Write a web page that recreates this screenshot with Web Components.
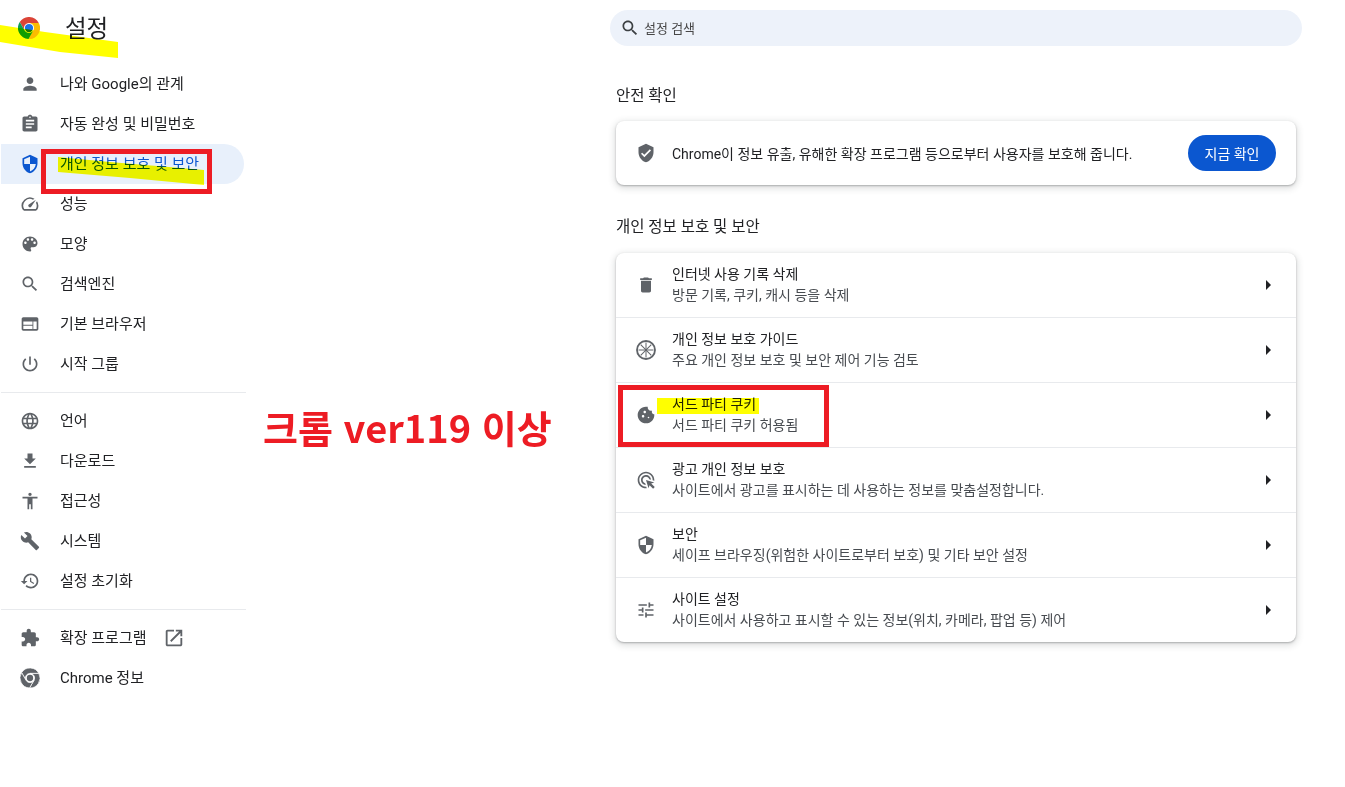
<!DOCTYPE html>
<html lang="ko">
<head>
<meta charset="utf-8">
<title>설정</title>
<style>
  html, body { margin: 0; background: #fff; }
  body {
    font: 14px Roboto, "Noto Sans CJK KR", sans-serif;
    color: #202124;
  }
</style>
</head>
<body>
<settings-app>
  <settings-sidebar slot="sidebar">
    <nav-item icon="person">나와 Google의 관계</nav-item>
    <nav-item icon="assignment">자동 완성 및 비밀번호</nav-item>
    <nav-item icon="shield" active>개인 정보 보호 및 보안</nav-item>
    <nav-item icon="speed">성능</nav-item>
    <nav-item icon="palette">모양</nav-item>
    <nav-item icon="search">검색엔진</nav-item>
    <nav-item icon="web">기본 브라우저</nav-item>
    <nav-item icon="power">시작 그룹</nav-item>
    <nav-divider></nav-divider>
    <nav-item icon="language">언어</nav-item>
    <nav-item icon="download">다운로드</nav-item>
    <nav-item icon="accessibility">접근성</nav-item>
    <nav-item icon="build">시스템</nav-item>
    <nav-item icon="restore">설정 초기화</nav-item>
    <nav-divider></nav-divider>
    <nav-item icon="extension" external>확장 프로그램</nav-item>
    <nav-item icon="chromeGrey">Chrome 정보</nav-item>
  </settings-sidebar>

  <search-bar>설정 검색</search-bar>

  <section-title>안전 확인</section-title>
  <settings-card>
    <safety-row>Chrome이 정보 유출, 유해한 확장 프로그램 등으로부터 사용자를 보호해 줍니다.</safety-row>
  </settings-card>

  <section-title second>개인 정보 보호 및 보안</section-title>
  <settings-card>
    <settings-row icon="delete"><span>인터넷 사용 기록 삭제</span><span slot="sub">방문 기록, 쿠키, 캐시 등을 삭제</span></settings-row>
    <settings-row icon="guide"><span>개인 정보 보호 가이드</span><span slot="sub">주요 개인 정보 보호 및 보안 제어 기능 검토</span></settings-row>
    <settings-row icon="cookie"><span>서드 파티 쿠키</span><span slot="sub">서드 파티 쿠키 허용됨</span></settings-row>
    <settings-row icon="ads"><span>광고 개인 정보 보호</span><span slot="sub">사이트에서 광고를 표시하는 데 사용하는 정보를 맞춤설정합니다.</span></settings-row>
    <settings-row icon="security"><span>보안</span><span slot="sub">세이프 브라우징(위험한 사이트로부터 보호) 및 기타 보안 설정</span></settings-row>
    <settings-row icon="tune"><span>사이트 설정</span><span slot="sub">사이트에서 사용하고 표시할 수 있는 정보(위치, 카메라, 팝업 등) 제어</span></settings-row>
  </settings-card>
</settings-app>
<screenshot-marks></screenshot-marks>

<script>
const chromeSectors = `
  <path d="M22.67 6.5A12 12 0 0 0 1.9 5.51L7.24 14.75A5.5 5.5 0 0 1 12 6.5Z" fill="var(--red, currentColor)"/>
  <path d="M11.43 23.99A12 12 0 0 0 22.67 6.5L12 6.5A5.5 5.5 0 0 1 16.76 14.75Z" fill="var(--yellow, currentColor)"/>
  <path d="M1.9 5.51A12 12 0 0 0 11.43 23.99L16.76 14.75A5.5 5.5 0 0 1 7.24 14.75Z" fill="var(--green, currentColor)"/>`;

const spokes = [0, 45, 90, 135].map(a =>
  `<path d="M12 3v18" stroke="currentColor" stroke-width="1.2" transform="rotate(${a} 12 12)"/>`).join('');

const ICONS = {
  person: '<path d="M12 12c2.21 0 4-1.79 4-4s-1.79-4-4-4-4 1.79-4 4 1.79 4 4 4zm0 2c-2.67 0-8 1.34-8 4v2h16v-2c0-2.66-5.33-4-8-4z"/>',
  assignment: '<path d="M19 3h-4.18C14.4 1.84 13.3 1 12 1c-1.3 0-2.4.84-2.82 2H5c-1.1 0-2 .9-2 2v14c0 1.1.9 2 2 2h14c1.1 0 2-.9 2-2V5c0-1.1-.9-2-2-2zm-7 0c.55 0 1 .45 1 1s-.45 1-1 1-1-.45-1-1 .45-1 1-1zm2 14H7v-2h7v2zm3-4H7v-2h10v2zm0-4H7V7h10v2z"/>',
  shield: '<path d="M12 1L3 5v6c0 5.55 3.84 10.74 9 12 5.16-1.26 9-6.45 9-12V5l-9-4zm0 10.99h7c-.53 4.12-3.28 7.79-7 8.94V12H5V6.3l7-3.11v8.8z"/>',
  security: '<path d="M12 1L3 5v6c0 5.55 3.84 10.74 9 12 5.16-1.26 9-6.45 9-12V5l-9-4zm0 10.99h7c-.53 4.12-3.28 7.79-7 8.94V12H5V6.3l7-3.11v8.8z"/>',
  speed: '<path d="M20.38 8.57l-1.23 1.85a8 8 0 0 1-.22 7.58H5.07A8 8 0 0 1 15.58 6.85l1.85-1.23A10 10 0 0 0 3.35 19a2 2 0 0 0 1.72 1h13.85a2 2 0 0 0 1.74-1 10 10 0 0 0-.27-10.44zm-9.79 6.84a2 2 0 0 0 2.83 0l5.66-8.49-8.49 5.66a2 2 0 0 0 0 2.83z"/>',
  palette: '<path d="M12 3c-4.97 0-9 4.03-9 9s4.03 9 9 9c.83 0 1.5-.67 1.5-1.5 0-.39-.15-.74-.39-1.01-.23-.26-.38-.61-.38-.99 0-.83.67-1.5 1.5-1.5H16c2.76 0 5-2.24 5-5 0-4.42-4.03-8-9-8zm-5.5 9c-.83 0-1.5-.67-1.5-1.5S5.67 9 6.5 9 8 9.67 8 10.5 7.33 12 6.5 12zm3-4C8.67 8 8 7.33 8 6.5S8.67 5 9.5 5s1.5.67 1.5 1.5S10.33 8 9.5 8zm5 0c-.83 0-1.5-.67-1.5-1.5S13.67 5 14.5 5s1.5.67 1.5 1.5S15.33 8 14.5 8zm3 4c-.83 0-1.5-.67-1.5-1.5S16.67 9 17.5 9s1.5.67 1.5 1.5-.67 1.5-1.5 1.5z"/>',
  search: '<path d="M15.5 14h-.79l-.28-.27C15.41 12.59 16 11.11 16 9.5 16 5.91 13.09 3 9.5 3S3 5.91 3 9.5 5.91 16 9.5 16c1.61 0 3.09-.59 4.23-1.57l.27.28v.79l5 4.99L20.49 19l-4.99-5zm-6 0C7.01 14 5 11.99 5 9.5S7.01 5 9.5 5 14 7.01 14 9.5 11.99 14 9.5 14z"/>',
  web: '<path d="M20 4H4c-1.1 0-1.99.9-1.99 2L2 18c0 1.1.9 2 2 2h16c1.1 0 2-.9 2-2V6c0-1.1-.9-2-2-2zm-5 14H4v-4h11v4zm0-5H4V9h11v4zm5 5h-4V9h4v9z"/>',
  power: '<path d="M13 3h-2v10h2V3zm4.83 2.17l-1.42 1.42C17.99 7.86 19 9.81 19 12c0 3.87-3.13 7-7 7s-7-3.13-7-7c0-2.19 1.01-4.14 2.58-5.42L6.17 5.17C4.23 6.82 3 9.26 3 12c0 4.97 4.03 9 9 9s9-4.03 9-9c0-2.74-1.23-5.18-3.17-6.83z"/>',
  language: '<path d="M11.99 2C6.47 2 2 6.48 2 12s4.47 10 9.99 10C17.52 22 22 17.52 22 12S17.52 2 11.99 2zm6.93 6h-2.95c-.32-1.25-.78-2.45-1.38-3.56 1.84.63 3.37 1.91 4.33 3.56zM12 4.04c.83 1.2 1.48 2.53 1.91 3.96h-3.82c.43-1.43 1.08-2.76 1.91-3.96zM4.26 14C4.1 13.36 4 12.69 4 12s.1-1.36.26-2h3.38c-.08.66-.14 1.32-.14 2 0 .68.06 1.34.14 2H4.26zm.82 2h2.95c.32 1.25.78 2.45 1.38 3.56-1.84-.63-3.37-1.9-4.33-3.56zm2.95-8H5.08c.96-1.66 2.49-2.93 4.33-3.56C8.81 5.55 8.35 6.75 8.03 8zM12 19.96c-.83-1.2-1.48-2.53-1.91-3.96h3.82c-.43 1.43-1.08 2.76-1.91 3.96zM14.34 14H9.66c-.09-.66-.16-1.32-.16-2 0-.68.07-1.35.16-2h4.68c.09.65.16 1.32.16 2 0 .68-.07 1.34-.16 2zm.25 5.56c.6-1.11 1.06-2.31 1.38-3.56h2.95c-.96 1.65-2.49 2.93-4.33 3.56zM16.36 14c.08-.66.14-1.32.14-2 0-.68-.06-1.34-.14-2h3.38c.16.64.26 1.31.26 2s-.1 1.36-.26 2h-3.38z"/>',
  download: '<path d="M19 9h-4V3H9v6H5l7 7 7-7zM5 18v2h14v-2H5z"/>',
  accessibility: '<path d="M12 2c1.1 0 2 .9 2 2s-.9 2-2 2-2-.9-2-2 .9-2 2-2zm9 7h-6v13h-2v-6h-2v6H9V9H3V7h18v2z"/>',
  build: '<path d="M22.7 19l-9.1-9.1c.9-2.3.4-5-1.5-6.9-2-2-5-2.4-7.4-1.3L9 6 6 9 1.6 4.7C.4 7.1.9 10.1 2.9 12.1c1.9 1.9 4.6 2.4 6.9 1.5l9.1 9.1c.4.4 1 .4 1.4 0l2.3-2.3c.5-.4.5-1.1.1-1.4z"/>',
  restore: '<path d="M13 3c-4.97 0-9 4.03-9 9H1l3.89 3.89.07.14L9 12H6c0-3.87 3.13-7 7-7s7 3.13 7 7-3.13 7-7 7c-1.93 0-3.68-.79-4.94-2.06l-1.42 1.42C8.27 19.99 10.51 21 13 21c4.97 0 9-4.03 9-9s-4.03-9-9-9zm-1 5v5l4.28 2.54.72-1.21-3.5-2.08V8H12z"/>',
  extension: '<path d="M20.5 11H19V7c0-1.1-.9-2-2-2h-4V3.5C13 2.12 11.88 1 10.5 1S8 2.12 8 3.5V5H4c-1.1 0-1.99.9-1.99 2v3.8H3.5c1.49 0 2.7 1.21 2.7 2.7s-1.21 2.7-2.7 2.7H2V20c0 1.1.9 2 2 2h3.8v-1.5c0-1.49 1.21-2.7 2.7-2.7 1.49 0 2.7 1.21 2.7 2.7V22H17c1.1 0 2-.9 2-2v-4h1.5c1.38 0 2.5-1.12 2.5-2.5S21.88 11 20.5 11z"/>',
  openNew: '<path d="M19 19H5V5h7V3H5c-1.11 0-2 .9-2 2v14c0 1.1.89 2 2 2h14c1.1 0 2-.9 2-2v-7h-2v7zM14 3v2h3.59l-9.83 9.83 1.41 1.41L19 6.41V10h2V3h-7z"/>',
  chromeGrey: '<g stroke="#fff" stroke-width=".9">' + chromeSectors + '</g><circle cx="12" cy="12" r="3.8"/>',
  chromeColor: chromeSectors + '<circle cx="12" cy="12" r="4.5" fill="#1a73e8"/>',
  verified: '<path d="M12 1L3 5v6c0 5.55 3.84 10.74 9 12 5.16-1.26 9-6.45 9-12V5l-9-4zm-2 16l-4-4 1.41-1.41L10 14.17l6.59-6.59L18 9l-8 8z"/>',
  delete: '<path d="M6 19c0 1.1.9 2 2 2h8c1.1 0 2-.9 2-2V7H6v12zM19 4h-3.5l-1-1h-5l-1 1H5v2h14V4z"/>',
  guide: spokes + '<circle cx="12" cy="12" r="10.8" fill="none" stroke="currentColor" stroke-width="2.2"/>',
  cookie: '<path d="M21.95 10.99c-1.79-.03-3.7-1.95-2.68-4.22-2.97 1-5.78-1.59-5.19-4.56C7.11.74 2 6.41 2 12c0 5.52 4.48 10 10 10 5.89 0 10.54-5.08 9.95-11.01zM8.5 15c-.83 0-1.5-.67-1.5-1.5S7.67 12 8.5 12s1.5.67 1.5 1.5S9.33 15 8.5 15zm2-5C9.67 10 9 9.33 9 8.5S9.67 7 10.5 7s1.5.67 1.5 1.5-.67 1.5-1.5 1.5zm4.5 6c-.55 0-1-.45-1-1s.45-1 1-1 1 .45 1 1-.45 1-1 1z"/>',
  ads: '<path d="M11.71 17.99C8.53 17.84 6 15.22 6 12c0-3.31 2.69-6 6-6 3.22 0 5.84 2.53 5.99 5.71l-2.1-.63C15.48 9.31 13.89 8 12 8c-2.21 0-4 1.79-4 4 0 1.89 1.31 3.48 3.08 3.89l.63 2.1zM22 12c0 .3-.01.6-.04.9l-1.97-.59c.01-.1.01-.21.01-.31 0-4.42-3.58-8-8-8s-8 3.58-8 8 3.58 8 8 8c.1 0 .21 0 .31-.01l.59 1.97c-.3.03-.6.04-.9.04-5.52 0-10-4.48-10-10S6.48 2 12 2s10 4.48 10 10zm-3.77 4.26L22 15l-10-3 3 10 1.26-3.77 4.27 4.27 1.98-1.98-4.28-4.26z"/>',
  tune: '<path d="M3 17v2h6v-2H3zM3 5v2h10V5H3zm10 16v-2h8v-2h-8v-2h-2v6h2zM7 9v2H3v2h4v2h2V9H7zm14 4v-2H11v2h10zm-6-4h2V7h4V5h-4V3h-2v6z"/>',
  arrow: '<path d="M10 7l5 5-5 5z"/>'
};

class UiIcon extends HTMLElement {
  connectedCallback() {
    const size = this.getAttribute('size') || 20;
    this.attachShadow({ mode: 'open' }).innerHTML = `
      <style>
        :host { display: block; width: ${size}px; height: ${size}px; flex: none; color: inherit; }
        svg { display: block; width: 100%; height: 100%; fill: currentColor; }
      </style>
      <svg viewBox="0 0 24 24">${ICONS[this.getAttribute('name')]}</svg>`;
  }
}

class SettingsApp extends HTMLElement {
  constructor() {
    super();
    this.attachShadow({ mode: 'open' }).innerHTML = `
      <style>
        :host { display: grid; grid-template-columns: 246px 692px; column-gap: 364px; }
        main { display: flex; flex-direction: column; padding-top: 10px; }
      </style>
      <slot name="sidebar"></slot>
      <main><slot></slot></main>`;
  }
}

class SettingsSidebar extends HTMLElement {
  constructor() {
    super();
    this.attachShadow({ mode: 'open' }).innerHTML = `
      <style>
        :host { display: block; }
        header { height: 64px; padding: 17px 0 0 18px; display: flex; align-items: flex-start; gap: 25px; box-sizing: border-box; }
        h1 { margin: 0; font-size: 23.5px; font-weight: 400; line-height: 24px; color: #202124; }
        ui-icon { --red: #db4437; --yellow: #fbbc04; --green: #0f9d58; }
      </style>
      <header><ui-icon name="chromeColor" size="22"></ui-icon><h1>설정</h1></header>
      <slot></slot>`;
  }
}

class NavItem extends HTMLElement {
  connectedCallback() {
    const active = this.hasAttribute('active');
    const external = this.hasAttribute('external')
      ? '<ui-icon class="ext" name="openNew" size="22"></ui-icon>' : '';
    this.attachShadow({ mode: 'open' }).innerHTML = `
      <style>
        :host { display: flex; align-items: center; height: 40px; width: 243px; margin-left: 1px;
          padding-left: 19px; gap: 20px; box-sizing: border-box; border-radius: 0 20px 20px 0; font-size: 15px;
          color: ${active ? '#0b57d0' : '#202124'}; background: ${active ? '#e8f0fb' : 'transparent'}; }
        ui-icon { color: ${active ? '#0b57d0' : '#5f6368'}; }
        ui-icon.ext { margin-left: -4px; }
        .label { margin-top: -4px; }
      </style>
      <ui-icon name="${this.getAttribute('icon')}"></ui-icon><div class="label"><slot></slot></div>${external}`;
  }
}

class NavDivider extends HTMLElement {
  constructor() {
    super();
    this.attachShadow({ mode: 'open' }).innerHTML = `
      <style>:host { display: block; height: 1px; margin: 8px 0 8px 1px; background: #e8eaed; }</style>`;
  }
}

class SearchBar extends HTMLElement {
  constructor() {
    super();
    this.attachShadow({ mode: 'open' }).innerHTML = `
      <style>
        :host { display: flex; align-items: center; gap: 4px; height: 36px; padding-left: 10px;
          box-sizing: border-box; border-radius: 18px; background: #edf2fa; color: #474747; font-size: 13px; }
        ui-icon { color: #3c4043; }
        .label { margin-top: -1px; }
      </style>
      <ui-icon name="search"></ui-icon><div class="label"><slot></slot></div>`;
  }
}

class SectionTitle extends HTMLElement {
  connectedCallback() {
    const second = this.hasAttribute('second');
    this.attachShadow({ mode: 'open' }).innerHTML = `
      <style>
        :host { display: block; margin: ${second ? 26 : 34}px 0 ${second ? 10 : 9}px 6px; font-size: 15.5px; line-height: 32px; height: 32px; color: #202124; }
      </style>
      <slot></slot>`;
  }
}

class SettingsCard extends HTMLElement {
  constructor() {
    super();
    this.attachShadow({ mode: 'open' }).innerHTML = `
      <style>
        :host { display: block; width: 680px; margin-left: 6px; border-radius: 8px; background: #fff;
          box-shadow: 0 1px 2px rgba(60,64,67,.35), 0 2px 6px 2px rgba(60,64,67,.15); }
        ::slotted(settings-row:not(:first-child)) { border-top: 1px solid #e8eaed; }
      </style>
      <slot></slot>`;
  }
}

class SafetyRow extends HTMLElement {
  constructor() {
    super();
    this.attachShadow({ mode: 'open' }).innerHTML = `
      <style>
        :host { display: flex; align-items: center; height: 64px; padding: 0 20px; gap: 16px; box-sizing: border-box; }
        ui-icon { color: #5f6368; }
        .text { flex: 1; margin-top: -1px; }
        button { height: 36px; width: 88px; border: 0; border-radius: 18px; background: #0b57d0; color: #fff; font: inherit; padding: 0; }
      </style>
      <ui-icon name="verified"></ui-icon>
      <div class="text"><slot></slot></div>
      <button>지금 확인</button>`;
  }
}

class SettingsRow extends HTMLElement {
  connectedCallback() {
    this.attachShadow({ mode: 'open' }).innerHTML = `
      <style>
        :host { display: flex; align-items: center; height: 65px; padding: 0 20px; gap: 16px; box-sizing: border-box; }
        :host(:first-child) { height: 64px; }
        ui-icon { color: #5f6368; }
        .text { flex: 1; display: flex; flex-direction: column; line-height: 20px; gap: 1px; margin-top: -1px; }
        .sub { color: #474b50; }
        ui-icon.arrow { color: #202124; margin-right: -4px; }
      </style>
      <ui-icon name="${this.getAttribute('icon')}"></ui-icon>
      <div class="text"><div><slot></slot></div><div class="sub"><slot name="sub"></slot></div></div>
      <ui-icon class="arrow" name="arrow" size="24"></ui-icon>`;
  }
}

// the hand-drawn markup somebody put on top of the screenshot
class ScreenshotMarks extends HTMLElement {
  constructor() {
    super();
    this.attachShadow({ mode: 'open' }).innerHTML = `
      <style>
        :host { position: absolute; left: 0; top: 0; width: 1345px; height: 787px; pointer-events: none; }
        svg { position: absolute; inset: 0; }
        .yellow { mix-blend-mode: multiply; }
        .note { position: absolute; left: 263px; top: 402px; color: #ed1c24; font: 700 38px/50px "Noto Sans CJK KR", sans-serif; white-space: nowrap; }
      </style>
      <svg class="yellow" width="1345" height="787">
        <polygon fill="#ffff00" points="0,25 45,32 118,42 118,58 60,52 0,42"/>
        <polygon fill="#ffff00" points="58,157 110,162 204,170 204,185 130,178 58,172"/>
        <rect fill="#ffff00" x="657" y="398" width="102" height="16"/>
      </svg>
      <svg width="1345" height="787">
        <rect x="43.5" y="151.5" width="166" height="40" fill="none" stroke="#ed1c24" stroke-width="5"/>
        <rect x="620.5" y="387.5" width="206" height="57" fill="none" stroke="#ed1c24" stroke-width="5"/>
      </svg>
      <div class="note">크롬 ver119 이상</div>`;
  }
}

customElements.define('ui-icon', UiIcon);
customElements.define('settings-app', SettingsApp);
customElements.define('settings-sidebar', SettingsSidebar);
customElements.define('nav-item', NavItem);
customElements.define('nav-divider', NavDivider);
customElements.define('search-bar', SearchBar);
customElements.define('section-title', SectionTitle);
customElements.define('settings-card', SettingsCard);
customElements.define('safety-row', SafetyRow);
customElements.define('settings-row', SettingsRow);
customElements.define('screenshot-marks', ScreenshotMarks);
</script>
</body>
</html>
